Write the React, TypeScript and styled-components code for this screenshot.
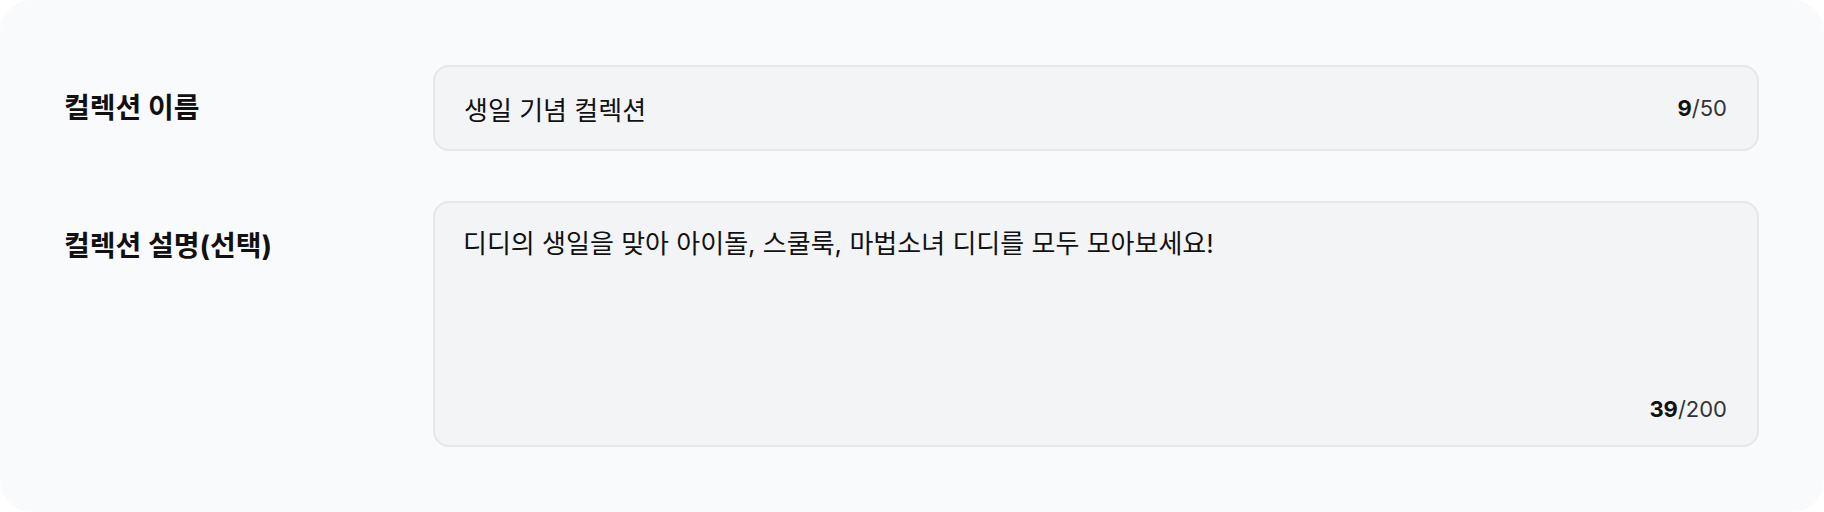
import { createGlobalStyle } from 'styled-components';
import styled from 'styled-components';

const GlobalStyle = createGlobalStyle`
  html, body {
    margin: 0;
    padding: 0;
    background: #ffffff;
  }
  * {
    box-sizing: border-box;
  }
`;

const Panel = styled.section`
  display: grid;
  grid-template-columns: 369px 1fr;
  row-gap: 50px;
  padding: 65px 65px 65px 64px;
  background-color: #f9fafb;
  border-radius: 32px;
  font-family: Inter, "Noto Sans CJK KR", sans-serif;
  color: #111111;
`;

const Label = styled.label<{ $top?: boolean }>`
  display: flex;
  align-items: ${(p) => (p.$top ? 'flex-start' : 'center')};
  padding-top: ${(p) => (p.$top ? '24px' : '0')};
  font-size: 28px;
  font-weight: 700;
  line-height: 1.5;
  color: #111111;
`;

const Field = styled.div`
  display: flex;
  align-items: center;
  height: 86px;
  padding: 0 30px 0 29px;
  background-color: #f3f4f6;
  border: 2px solid #e5e7eb;
  border-radius: 16px;
`;

const AreaField = styled.div`
  display: flex;
  flex-direction: column;
  height: 246px;
  padding: 22px 30px 20px 28px;
  background-color: #f3f4f6;
  border: 2px solid #e5e7eb;
  border-radius: 16px;
`;

const TextInput = styled.input`
  flex: 1;
  min-width: 0;
  margin: 0;
  padding: 0;
  border: none;
  outline: none;
  background: transparent;
  font-family: inherit;
  font-size: 26px;
  color: #111111;
`;

const TextArea = styled.textarea`
  flex: 1;
  width: 100%;
  margin: 0;
  padding: 0;
  border: none;
  outline: none;
  resize: none;
  background: transparent;
  font-family: inherit;
  font-size: 26px;
  line-height: 38px;
  color: #111111;
`;

const Counter = styled.div<{ $bottom?: boolean }>`
  align-self: ${(p) => (p.$bottom ? 'flex-end' : 'center')};
  font-size: 22px;
  line-height: 1.4;
  color: #333333;

  b {
    font-weight: 700;
    color: #111111;
  }
`;

const fields = {
  name: '생일 기념 컬렉션',
  desc: '디디의 생일을 맞아 아이돌, 스쿨룩, 마법소녀 디디를 모두 모아보세요!',
};

export default function App() {
  return (
    <>
      <GlobalStyle />
      <Panel>
        <Label>컬렉션 이름</Label>
        <Field>
          <TextInput readOnly value={fields.name} />
          <Counter>
            <b>{[...fields.name].length}</b>/50
          </Counter>
        </Field>

        <Label $top>컬렉션 설명(선택)</Label>
        <AreaField>
          <TextArea readOnly value={fields.desc} />
          <Counter $bottom>
            <b>{[...fields.desc].length}</b>/200
          </Counter>
        </AreaField>
      </Panel>
    </>
  );
}
